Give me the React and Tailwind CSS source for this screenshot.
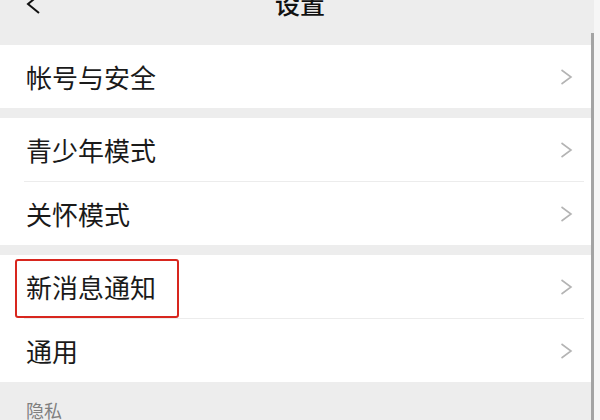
import React from "react";

const Chevron = () => (
  <svg width="13" height="16" viewBox="0 0 13 16" fill="none" className="shrink-0">
    <polyline points="1.5,1 11,8 1.5,15" stroke="#b4b4b4" strokeWidth="1.6" strokeLinejoin="miter" fill="none" />
  </svg>
);

const Row = ({ label, divider, children }) => (
  <div className={`relative ${divider ? "h-[64px]" : "h-[63px]"} shrink-0 flex items-center bg-white pl-[26px] pr-[27px]`}>
    <span className="flex-1 text-[26px] leading-none text-[#1a1a1a]">{label}</span>
    <Chevron />
    {divider && <div className="absolute left-[24px] right-[16px] bottom-0 h-px bg-[#ececec]" />}
    {children}
  </div>
);

export default function App() {
  return (
    <div
      className="relative w-[600px] h-[420px] overflow-hidden bg-[#ededed] flex flex-col"
      style={{ fontFamily: '"Noto Sans CJK SC", "Noto Sans", sans-serif' }}
    >
      <div className="h-[45px] shrink-0 flex flex-col">
        <div className="flex items-center h-[26px] -mt-[10px] px-[26px]">
          <svg width="16" height="20" viewBox="0 0 16 20" fill="none" className="mt-[1px]">
            <polyline points="13,1 2,10 13,19" stroke="#111" strokeWidth="2" fill="none" />
          </svg>
          <div className="flex-1 text-center text-[25px] leading-none font-medium text-[#111] -ml-[16px]">设置</div>
        </div>
      </div>

      <Row label="帐号与安全" />
      <div className="h-[10px] shrink-0" />
      <Row label="青少年模式" divider />
      <Row label="关怀模式" />
      <div className="h-[10px] shrink-0" />
      <Row label="新消息通知" divider>
        <div className="absolute left-[15px] top-[4px] w-[164px] h-[59px] border-2 border-[#d8261e] rounded-[3px]" />
      </Row>
      <Row label="通用" />
      <div className="pl-[26px] pt-[19px] text-[18px] leading-none text-[#808080]">隐私</div>

      <div className="absolute right-[6px] top-[33px] bottom-0 w-[3px] bg-[#a4a4a4]" />
      <div className="absolute right-0 top-0 bottom-0 w-[6px] bg-[#f6f6f6]" />
    </div>
  );
}
